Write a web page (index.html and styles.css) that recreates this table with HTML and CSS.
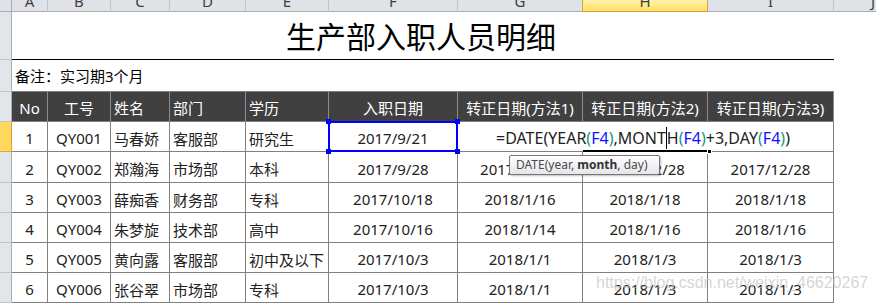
FILE: index.html
```html
<!DOCTYPE html>
<html lang="zh-CN">
<head>
<meta charset="utf-8">
<title>生产部入职人员明细</title>
<link rel="stylesheet" href="styles.css">
</head>
<body>
<div class="sheet">
  <div class="corner"></div>
  <div class="ch"><span>A</span></div>
  <div class="ch"><span>B</span></div>
  <div class="ch"><span>C</span></div>
  <div class="ch"><span>D</span></div>
  <div class="ch"><span>E</span></div>
  <div class="ch"><span>F</span></div>
  <div class="ch"><span>G</span></div>
  <div class="ch sel"><span>H</span></div>
  <div class="ch"><span>I</span></div>
  <div class="ch j"><span>J</span></div>

  <div class="rh"></div>
  <div class="title">生产部入职人员明细</div>
  <div class="e"></div>

  <div class="rh"></div>
  <div class="remark">备注：实习期3个月</div>
  <div class="e"></div>

  <div class="rh"></div>
  <div class="h">No</div>
  <div class="h">工号</div>
  <div class="h l">姓名</div>
  <div class="h l">部门</div>
  <div class="h l">学历</div>
  <div class="h">入职日期</div>
  <div class="h">转正日期(方法1)</div>
  <div class="h">转正日期(方法2)</div>
  <div class="h">转正日期(方法3)</div>
  <div class="e"></div>

  <div class="rh sel"></div>
  <div class="c">1</div>
  <div class="c">QY001</div>
  <div class="c l">马春娇</div>
  <div class="c l">客服部</div>
  <div class="c l">研究生</div>
  <div class="c ref">2017/9/21<i class="hd tl"></i><i class="hd tr"></i><i class="hd bl"></i><i class="hd br"></i></div>
  <div class="c edit"><span class="fx">=DATE(YEAR<b class="p">(</b><b class="r">F4</b><b class="p">)</b>,MONT<span class="caret"></span>H<b class="p">(</b><b class="r">F4</b><b class="p">)</b>+3,DAY<b class="p">(</b><b class="r">F4</b><b class="p">)</b>)</span><i class="editline"></i><i class="edithandle"></i>
    <div class="tip">DATE(year, <strong>month</strong>, day)</div>
  </div>
  <div class="e"></div>

  <div class="rh"></div>
  <div class="c">2</div>
  <div class="c">QY002</div>
  <div class="c l">郑瀚海</div>
  <div class="c l">市场部</div>
  <div class="c l">本科</div>
  <div class="c">2017/9/28</div>
  <div class="c">2017/12/28</div>
  <div class="c">2017/12/28</div>
  <div class="c">2017/12/28</div>
  <div class="e"></div>

  <div class="rh"></div>
  <div class="c">3</div>
  <div class="c">QY003</div>
  <div class="c l">薛痴香</div>
  <div class="c l">财务部</div>
  <div class="c l">专科</div>
  <div class="c">2017/10/18</div>
  <div class="c">2018/1/16</div>
  <div class="c">2018/1/18</div>
  <div class="c">2018/1/18</div>
  <div class="e"></div>

  <div class="rh"></div>
  <div class="c">4</div>
  <div class="c">QY004</div>
  <div class="c l">朱梦旋</div>
  <div class="c l">技术部</div>
  <div class="c l">高中</div>
  <div class="c">2017/10/16</div>
  <div class="c">2018/1/14</div>
  <div class="c">2018/1/16</div>
  <div class="c">2018/1/16</div>
  <div class="e"></div>

  <div class="rh"></div>
  <div class="c">5</div>
  <div class="c">QY005</div>
  <div class="c l">黄向露</div>
  <div class="c l">客服部</div>
  <div class="c l">初中及以下</div>
  <div class="c">2017/10/3</div>
  <div class="c">2018/1/1</div>
  <div class="c">2018/1/3</div>
  <div class="c">2018/1/3</div>
  <div class="e"></div>

  <div class="rh"></div>
  <div class="c">6</div>
  <div class="c">QY006</div>
  <div class="c l">张谷翠</div>
  <div class="c l">市场部</div>
  <div class="c l">专科</div>
  <div class="c">2017/10/3</div>
  <div class="c">2018/1/1</div>
  <div class="c">2018/1/3</div>
  <div class="c">2018/1/3</div>
  <div class="e"></div>

  <div class="watermark">https://blog.csdn.net/weixin_46620267</div>
</div>
</body>
</html>
```
FILE: styles.css
```css
* { box-sizing: border-box; }
html, body { margin: 0; padding: 0; background: #fff; overflow: hidden; }
body { width: 876px; height: 303px; }

.sheet {
  position: relative;
  display: grid;
  grid-template-columns: 12px 36px 63px 59px 76px 83px 129px 125px 125px 126px 1fr;
  grid-template-rows: 12px 48px 32px 30px 30px 31px 30px 30px 30px 30px;
  width: 876px;
  height: 303px;
  overflow: hidden;
  font-family: "Noto Sans", "Noto Sans CJK SC", sans-serif;
  font-size: 15px;
  color: #222;
}

.corner {
  background: #dfe2e6;
  border-right: 1px solid #a9aeb5;
  border-bottom: 1px solid #a9aeb5;
}

.ch {
  background: #dfe2e6;
  border-right: 1px solid #c0c4ca;
  border-bottom: 1px solid #a9aeb5;
  overflow: hidden;
  display: flex;
  justify-content: center;
  align-items: flex-start;
  color: #3f3f3f;
  font-size: 15px;
  line-height: 15px;
}
.ch span { display: block; margin-top: -6px; }
.ch.j { justify-content: flex-start; padding-left: 37px; border-right: 0; }
.ch.sel {
  background: linear-gradient(#fff1a6, #ffe06a);
  border-left: 1px solid #dba64a;
  border-right: 1px solid #dba64a;
  border-bottom: 1px solid #d89a32;
  margin-left: -1px;
}

.rh {
  background: #e2e5e9;
  border-right: 1px solid #a9aeb5;
  border-bottom: 1px solid #c0c4ca;
}
.rh.sel {
  background: #ffd75e;
  border-right: 1px solid #e39c2e;
  border-bottom: 1px solid #e3a33a;
}

.e { background: #fff; }

.title {
  grid-column: span 9;
  border-bottom: 1px solid #000;
  display: flex;
  justify-content: center;
  align-items: flex-end;
  font-size: 30px;
  line-height: 40px;
  color: #000;
  padding-bottom: 2px;
  padding-right: 4px;
}

.remark {
  grid-column: span 9;
  border-bottom: 1px solid #7f7f7f;
  display: flex;
  align-items: center;
  padding-left: 3px;
  color: #000;
}

.h, .c {
  display: flex;
  align-items: center;
  justify-content: center;
  border-right: 1px solid #808080;
  border-bottom: 1px solid #808080;
  white-space: nowrap;
  padding-top: 3px;
}
.h {
  background: #404040;
  color: #fff;
  border-right-color: #8c8c8c;
  border-bottom-color: #7f7f7f;
  padding-top: 2px;
}
.l { justify-content: flex-start; padding-left: 3px; }

.ref { position: relative; }
.ref::after {
  content: "";
  position: absolute;
  left: -1px; top: -1px; right: -1px; bottom: -1px;
  border: 2px solid #0000ff;
}
.hd {
  position: absolute;
  width: 5px; height: 5px;
  background: #0000ff;
  z-index: 2;
}
.hd.tl { left: -3px; top: -3px; }
.hd.tr { right: -3px; top: -3px; }
.hd.bl { left: -3px; bottom: -3px; }
.hd.br { right: -3px; bottom: -3px; }

.edit {
  grid-column: span 3;
  position: relative;
  justify-content: flex-start;
  padding-left: 38px;
  font-size: 16px;
}
.fx { display: flex; align-items: center; }
.fx b { font-weight: normal; }
.fx .p { color: #129a80; }
.fx .r { color: #1010ff; }
.caret {
  display: inline-block;
  width: 1px;
  height: 22px;
  background: #000;
  margin: 0 0 1px 0;
}
.editline {
  position: absolute;
  left: 125px;
  bottom: -1px;
  width: 126px;
  height: 2px;
  background: #000;
}
.edithandle {
  position: absolute;
  left: 249px;
  bottom: -3px;
  width: 5px;
  height: 5px;
  background: #000;
  border: 1px solid #fff;
}

.tip {
  position: absolute;
  left: 51px;
  top: 33px;
  width: 151px;
  height: 20px;
  z-index: 5;
  display: block;
  padding: 0 0 0 6px;
  line-height: 18px;
  background: linear-gradient(#ffffff, #e6e6ea);
  border: 1px solid #767676;
  border-radius: 2px;
  box-shadow: 1px 1px 2px rgba(0,0,0,0.25);
  font-family: "Noto Sans", sans-serif;
  font-size: 12px;
  color: #4a4a4a;
  white-space: nowrap;
}
.tip strong { font-weight: bold; color: #333; }

.watermark {
  position: absolute;
  left: 596px;
  top: 275px;
  font-family: "Liberation Sans", Arial, sans-serif;
  font-size: 16px;
  line-height: 16px;
  color: rgba(195, 195, 195, 0.7);
  white-space: nowrap;
  z-index: 6;
}
```
